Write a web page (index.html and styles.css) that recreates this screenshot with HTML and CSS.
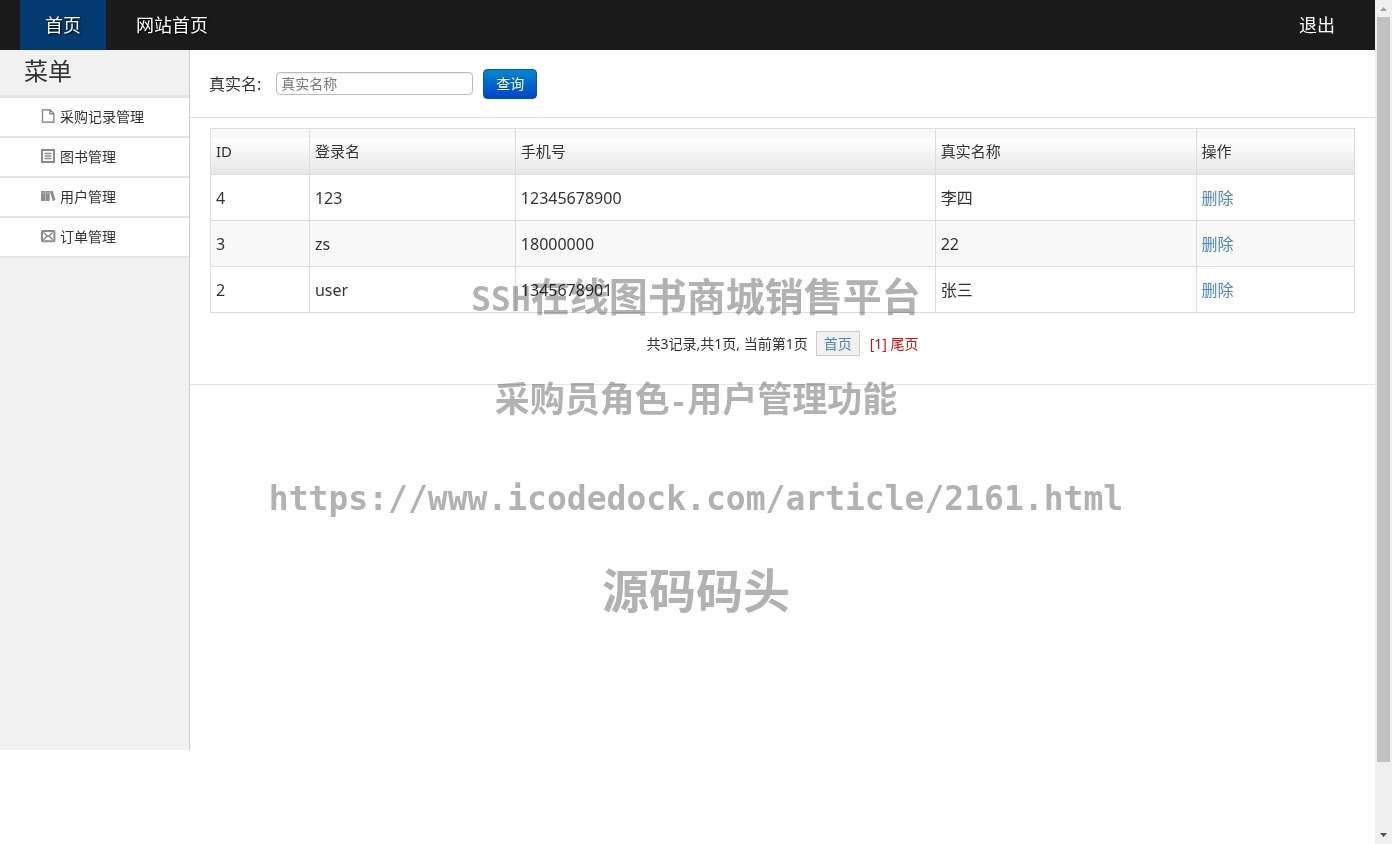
FILE: index.html
```html
<!DOCTYPE html>
<html lang="zh-CN">
<head>
<meta charset="utf-8">
<title>用户管理</title>
<link rel="stylesheet" href="styles.css">
</head>
<body>
<div class="window">
  <div class="page">
    <nav class="topbar">
      <a class="topbar-link active" href="#">首页</a>
      <a class="topbar-link" href="#">网站首页</a>
      <a class="topbar-link logout" href="#">退出</a>
    </nav>
    <div class="body">
      <aside class="sidebar">
        <h2 class="menu-title">菜单</h2>
        <ul class="menu">
          <li><a class="menu-link" href="#"><svg class="icon" viewBox="0 0 14 14"><path d="M1.500.700h7.500l3.800 3.800v8.800H1.500z M8.800.700v4h4" fill="none" stroke="#8c8c8c" stroke-width="1.400"/></svg>采购记录管理</a></li>
          <li><a class="menu-link" href="#"><svg class="icon" viewBox="0 0 14 14"><path d="M1 1h12v12H1z" fill="none" stroke="#8c8c8c" stroke-width="2"/><path d="M3.500 4.500h7M3.500 7h7M3.500 9.500h7" stroke="#8c8c8c" stroke-width="1.400"/></svg>图书管理</a></li>
          <li><a class="menu-link" href="#"><svg class="icon" viewBox="0 0 14 14"><path d="M0 2h4.300v10H0zM4.700 2h4v10h-4zM8.900 2.500l2.600-.9L14.600 11l-2.900 1z" fill="#8c8c8c"/><path d="M1.200 4h1.600M5.900 4h1.600" stroke="#ddd" stroke-width="1"/></svg>用户管理</a></li>
          <li><a class="menu-link" href="#"><svg class="icon" viewBox="0 0 14 14"><rect x="1" y="2" width="12.400" height="10.200" rx=".6" fill="none" stroke="#8c8c8c" stroke-width="2"/><path d="M2.500 3.500L7 7.500l4.700-4M2.500 10.800l3.200-3.600M11.700 10.800L8.500 7.200" fill="none" stroke="#8c8c8c" stroke-width="1.400"/></svg>订单管理</a></li>
        </ul>
      </aside>
      <main class="content">
        <form class="search">
          <label for="realname">真实名:</label>
          <input class="search-input" id="realname" type="text" placeholder="真实名称">
          <button class="search-button" type="button">查询</button>
        </form>
        <table class="users">
          <colgroup><col class="col-id"><col class="col-login"><col class="col-phone"><col class="col-name"><col></colgroup>
          <thead><tr><th>ID</th><th>登录名</th><th>手机号</th><th>真实名称</th><th>操作</th></tr></thead>
          <tbody>
            <tr><td>4</td><td>123</td><td>12345678900</td><td>李四</td><td><a href="#">删除</a></td></tr>
            <tr><td>3</td><td>zs</td><td>18000000</td><td>22</td><td><a href="#">删除</a></td></tr>
            <tr><td>2</td><td>user</td><td>1345678901</td><td>张三</td><td><a href="#">删除</a></td></tr>
          </tbody>
        </table>
        <div class="pager">
          <span>共3记录,共1页, 当前第1页</span>
          <a class="pager-first" href="#">首页</a>
          <span class="pager-current">[1] 尾页</span>
        </div>
      </main>
    </div>
  </div>
  <div class="scrollbar">
    <svg class="arrow" viewBox="0 0 17 17"><path d="M5 11h7L8.500 7z" fill="#a0a0a0"/></svg>
    <div class="track"><div class="thumb"></div></div>
    <svg class="arrow" viewBox="0 0 17 17"><path d="M5 6h7l-3.500 4z" fill="#505050"/></svg>
  </div>
</div>
<div class="watermark">
  <p class="mark-title"><span class="mark-latin">SSH</span>在线图书商城销售平台</p>
  <p class="mark-role">采购员角色<span class="mark-dash">-</span>用户管理功能</p>
  <p class="mark-url">https://www.icodedock.com/article/2161.html</p>
  <p class="mark-brand">源码码头</p>
</div>
</body>
</html>
```
FILE: styles.css
```css
* { box-sizing: border-box; }
body {
  margin: 0;
  position: relative;
  background: #fff;
  color: #333;
  font-family: "Noto Sans", "Noto Sans CJK SC", sans-serif;
  font-size: 14px;
  line-height: 20px;
}
a { color: #4a87bd; text-decoration: none; }
.window { display: flex; min-height: 100vh; }
.page { flex: 1; min-width: 0; }
.topbar {
  display: flex;
  height: 50px;
  padding: 0 15px 0 20px;
  background: #1a1a1a;
}
.topbar-link {
  padding: 0 25px;
  color: #fff;
  font-size: 18px;
  line-height: 50px;
  text-shadow: 1px 1px 2px #000;
}
.topbar-link.active { margin-right: 5px; background: #033a70; }
.topbar-link.logout { margin-left: auto; text-shadow: none; }
.body { display: flex; align-items: flex-start; }
.sidebar {
  flex: none;
  width: 190px;
  min-height: 700px;
  background: #f1f1f1;
  border-right: 1px solid #ccc;
}
.menu-title {
  margin: 0;
  padding: 0 24px 3px;
  border-bottom: 3px solid #e5e5e5;
  font-size: 24px;
  font-weight: 400;
  line-height: 42px;
}
.menu { margin: 0; padding: 0; list-style: none; }
.menu-link {
  display: flex;
  align-items: center;
  gap: 5px;
  height: 40px;
  padding-left: 41px;
  background: #fff;
  border-bottom: 2px solid #e5e5e5;
  color: #333;
}
.icon { width: 14px; height: 14px; margin-bottom: 2px; overflow: visible; }
.content { flex: 1; min-width: 0; border-bottom: 1px solid #e5e5e5; }
.search {
  display: flex;
  align-items: center;
  height: 68px;
  padding-left: 19px;
  border-bottom: 1px solid #e5e5e5;
  font-size: 16px;
}
.search-input {
  width: 197px;
  height: 23px;
  margin: 0 10px 0 15px;
  padding: 0 4px;
  border: 1px solid #bbb;
  border-radius: 4px;
  box-shadow: inset 0 1px 1px #eee;
  font: inherit;
  font-size: 14px;
}
.search-input::placeholder { color: #777; }
.search-button {
  height: 30px;
  padding: 0 12px;
  border: 1px solid #0a56ad;
  border-radius: 4px;
  background: linear-gradient(#0088cc, #0044cc);
  color: #fff;
  font: inherit;
  font-size: 14px;
  text-shadow: 0 -1px 0 #0003;
}
.users {
  width: calc(100% - 40px);
  margin: 10px 20px 0;
  border-collapse: collapse;
  table-layout: fixed;
  font-size: 16px;
}
.col-id { width: 8.65%; }
.col-login { width: 18%; }
.col-phone { width: 36.7%; }
.col-name { width: 22.8%; }
.users th, .users td {
  height: 46px;
  padding: 0 5px;
  border: 1px solid #ddd;
  text-align: left;
  font-weight: 400;
}
.users th { padding-bottom: 2px; font-size: 15px; }
.users thead tr { background: linear-gradient(#f8f8f8 9px, #fff 9px, #e5e5e5); }
.users tbody tr:nth-child(even) { background: #f9f9f9; }
.pager {
  display: flex;
  justify-content: center;
  align-items: center;
  padding: 18px 0 28px;
}
.pager-first {
  margin: 0 10px 0 8px;
  padding: 2px 7px 1px;
  border: 1px solid #ccc;
  background: #f1f1f1;
}
.pager-current { color: #d01010; }
.scrollbar {
  display: flex;
  flex-direction: column;
  flex: none;
  width: 17px;
  background: #f0f0f0;
}
.arrow { flex: none; width: 17px; height: 17px; }
.track { flex: 1; display: flex; flex-direction: column; padding: 0 2px; }
.thumb { flex: 0 0 92%; background: #c1c1c1; }
.watermark {
  position: absolute;
  top: 274px;
  left: 0;
  right: 0;
  color: #b2b2b2;
  font-family: "Noto Sans CJK SC", sans-serif;
  font-weight: 700;
  line-height: 40px;
  text-align: center;
  white-space: nowrap;
  pointer-events: none;
  mix-blend-mode: multiply;
}
.watermark p { height: 40px; margin: 0; }
.mark-title { font-size: 39px; }
.mark-role { font-size: 35px; }
.watermark .mark-role { margin-top: 63px; }
.mark-url { font-size: 33px; }
.watermark .mark-url { margin-top: 62px; }
.mark-brand { font-size: 47px; }
.watermark .mark-brand { margin-top: 49px; }
.mark-latin, .mark-dash, .mark-url { font-family: "DejaVu Sans Mono", monospace; }
.mark-latin { font-size: 33px; }
.mark-dash { font-size: 29px; }
```
